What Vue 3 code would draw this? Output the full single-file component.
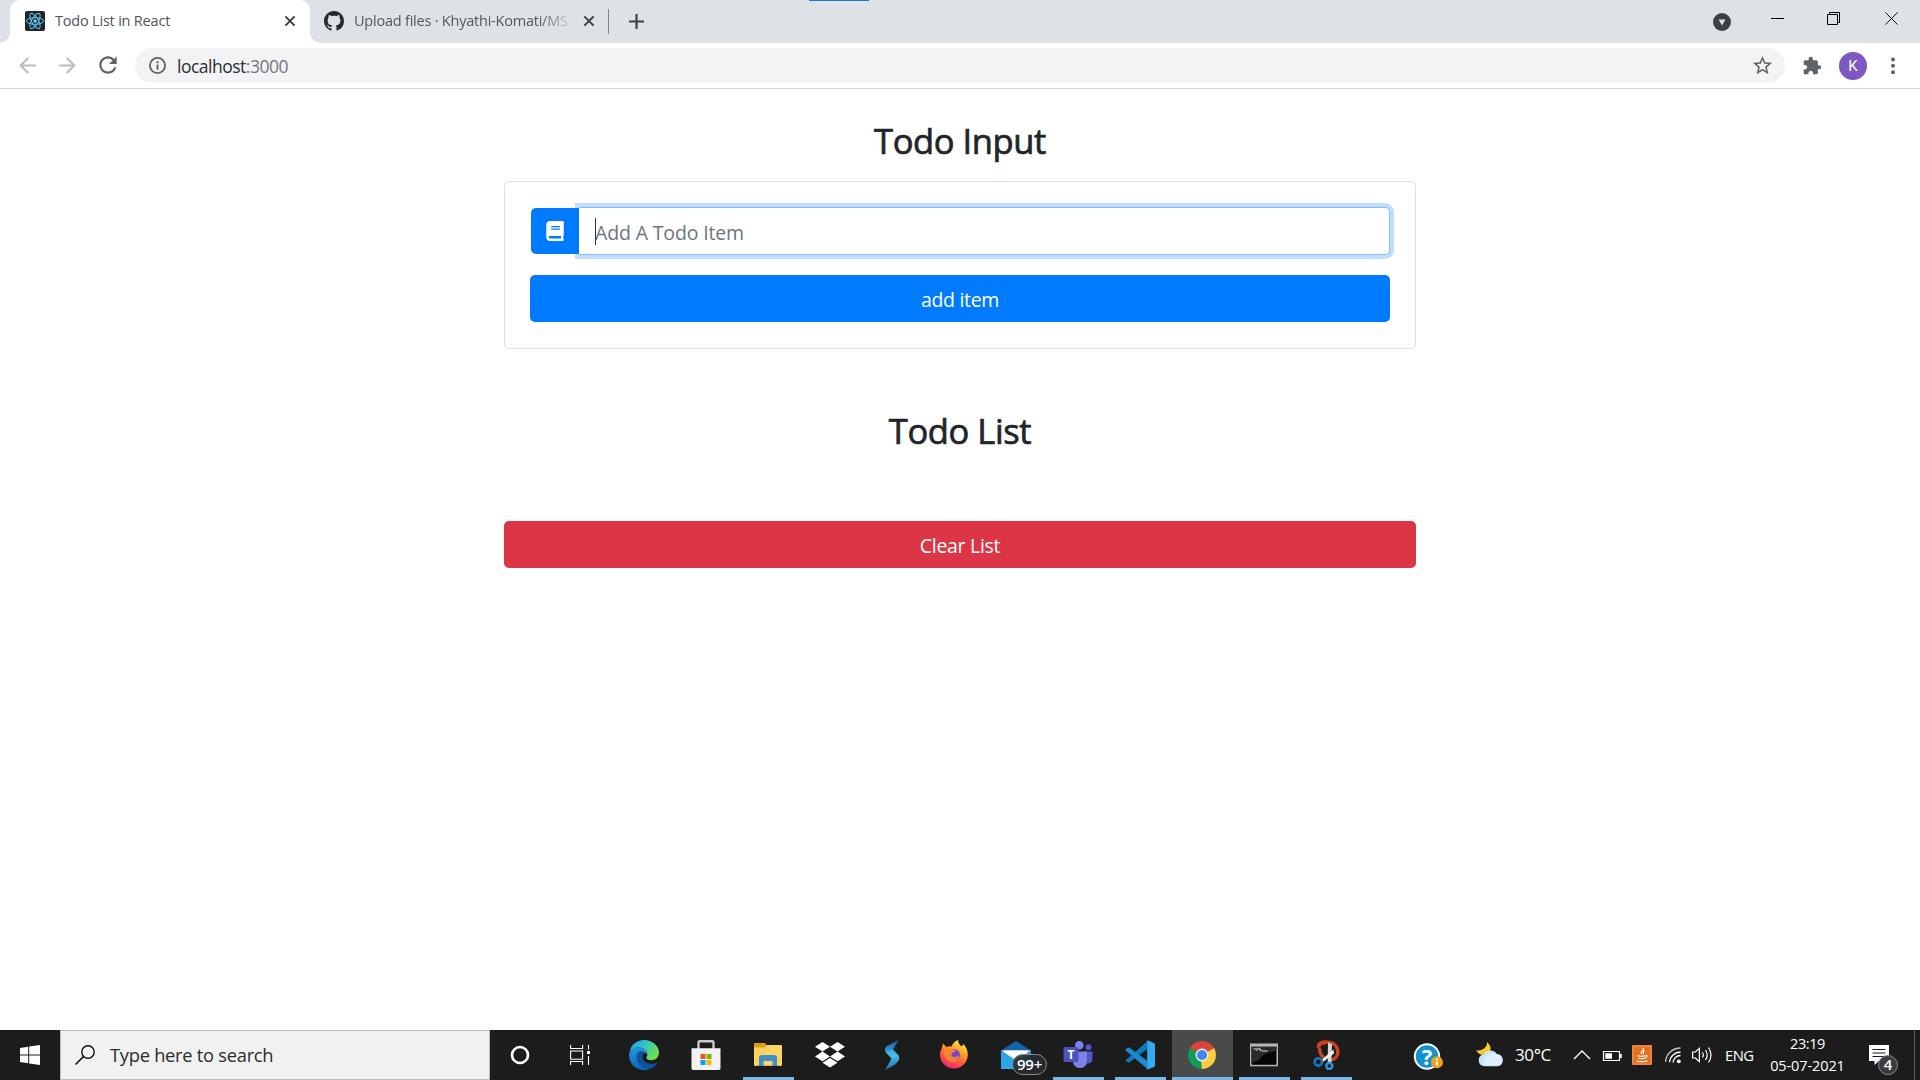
<script setup>
const windowsTiles = ['M0 2.9 8.2 1.7V9.5H0z', 'M9.2 1.5 20 0V9.5H9.2z', 'M0 10.5H8.2V18.3L0 17.1z', 'M9.2 10.5H20V20L9.2 18.5z']
</script>

<template>
  <div class="screen">
    <header class="tabstrip">
      <div class="tab active">
        <svg class="favicon" viewBox="0 0 20 20">
          <rect width="20" height="20" rx="2" fill="#20232a" />
          <g fill="none" stroke="#61c9e8" stroke-width="1">
            <ellipse cx="10" cy="10" rx="8.6" ry="3.3" />
            <ellipse cx="10" cy="10" rx="8.6" ry="3.3" transform="rotate(60 10 10)" />
            <ellipse cx="10" cy="10" rx="8.6" ry="3.3" transform="rotate(120 10 10)" />
          </g>
          <circle cx="10" cy="10" r="1.7" fill="#61dafb" />
        </svg>
        <span class="title t1">Todo List in React</span>
        <svg class="x x1" viewBox="0 0 12 12"><path d="M1.4 1.4l9.2 9.2M10.6 1.4l-9.2 9.2" stroke="#3c4043" stroke-width="2" /></svg>
      </div>
      <div class="tab second">
        <svg class="favicon" viewBox="0 0 16 16"><path fill="#24292e" d="M8 0C3.58 0 0 3.58 0 8c0 3.54 2.29 6.53 5.47 7.59.4.07.55-.17.55-.38 0-.19-.01-.82-.01-1.49-2.01.37-2.53-.49-2.69-.94-.09-.23-.48-.94-.82-1.13-.28-.15-.68-.52-.01-.53.63-.01 1.08.58 1.23.82.72 1.21 1.87.87 2.33.66.07-.52.28-.87.51-1.07-1.78-.2-3.64-.89-3.64-3.95 0-.87.31-1.59.82-2.15-.08-.2-.36-1.02.08-2.12 0 0 .67-.21 2.2.82.64-.18 1.32-.27 2-.27s1.36.09 2 .27c1.53-1.04 2.2-.82 2.2-.82.44 1.1.16 1.92.08 2.12.51.56.82 1.27.82 2.15 0 3.07-1.87 3.75-3.65 3.95.29.25.54.73.54 1.48 0 1.07-.01 1.93-.01 2.2 0 .21.15.46.55.38A8.01 8.01 0 0 0 16 8c0-4.42-3.58-8-8-8z" /></svg>
        <span class="title t2">Upload files · Khyathi-Komati/MS</span>
        <svg class="x x2" viewBox="0 0 12 12"><path d="M1.4 1.4l9.2 9.2M10.6 1.4l-9.2 9.2" stroke="#3c4043" stroke-width="2" /></svg>
      </div>
      <i class="tabsep"></i>
      <svg class="plus" viewBox="0 0 15 15"><path d="M7.5 0v15M0 7.5h15" stroke="#3c4043" stroke-width="2.2" /></svg>
      <i class="accent"></i>
      <div class="winctl">
        <svg class="tabsearch" viewBox="0 0 18 18"><circle cx="9" cy="9" r="9" fill="#3c4043" /><path d="M5.6 6.6h6.8L9 12.4z" fill="#dee1e6" /></svg>
        <svg class="min" viewBox="0 0 13 13"><path d="M0 6.5h13" stroke="#000" /></svg>
        <svg class="max" viewBox="0 0 13 13"><path d="M.5 2.5h10v10H.5zM2.5 2.5v-2h10v10h-2" fill="none" stroke="#000" /></svg>
        <svg class="cls" viewBox="0 0 13 13"><path d="M.4.4l12.2 12.2M12.6.4.4 12.6" stroke="#111" /></svg>
      </div>
    </header>

    <div class="toolbar">
      <svg class="nav" viewBox="0 0 24 24"><path fill="#babcbe" d="M20 11H7.83l5.59-5.59L12 4l-8 8 8 8 1.41-1.41L7.83 13H20v-2z" /></svg>
      <svg class="nav" viewBox="0 0 24 24"><path fill="#babcbe" d="M12 4l-1.41 1.41L16.17 11H4v2h12.17l-5.58 5.59L12 20l8-8z" /></svg>
      <svg class="nav reload" viewBox="0 0 24 24"><path fill="#5f6368" d="M17.65 6.35C16.2 4.9 14.21 4 12 4c-4.42 0-7.99 3.58-7.99 8s3.57 8 7.99 8c3.73 0 6.84-2.55 7.73-6h-2.08c-.82 2.33-3.04 4-5.65 4-3.31 0-6-2.69-6-6s2.69-6 6-6c1.66 0 3.14.69 4.22 1.78L13 11h7V4l-2.35 2.35z" /></svg>
      <div class="omnibox">
        <svg class="info" viewBox="0 0 16 16"><circle cx="8" cy="8" r="7.1" fill="none" stroke="#5f6368" stroke-width="1.7" /><path d="M8 7v5M8 4v1.8" stroke="#5f6368" stroke-width="1.8" /></svg>
        <span class="url">localhost<span class="port">:3000</span></span>
        <svg class="star" viewBox="0 0 24 24"><path fill="#5f6368" d="M22 9.24l-7.19-.62L12 2 9.19 8.63 2 9.24l5.46 4.73L5.82 21 12 17.27 18.18 21l-1.63-7.03L22 9.24zM12 15.4l-3.76 2.27 1-4.28-3.32-2.88 4.38-.38L12 6.1l1.71 4.04 4.38.38-3.32 2.88 1 4.28L12 15.4z" /></svg>
      </div>
      <svg class="ext" viewBox="0 0 24 24"><path fill="#5f6368" d="M20.5 11H19V7c0-1.1-.9-2-2-2h-4V3.5C13 2.12 11.88 1 10.5 1S8 2.12 8 3.5V5H4c-1.1 0-1.99.9-1.99 2v3.8H3.5c1.49 0 2.7 1.21 2.7 2.7s-1.21 2.7-2.7 2.7H2V20c0 1.1.9 2 2 2h3.8v-1.5c0-1.49 1.21-2.7 2.7-2.7 1.49 0 2.7 1.21 2.7 2.7V22H17c1.1 0 2-.9 2-2v-4h1.5c1.38 0 2.5-1.12 2.5-2.5S21.88 11 20.5 11z" /></svg>
      <span class="avatar">K</span>
      <svg class="dots" viewBox="0 0 8 18" fill="#5f6368"><circle cx="4" cy="2.4" r="2" /><circle cx="4" cy="8.8" r="2" /><circle cx="4" cy="15.2" r="2" /></svg>
    </div>

    <main class="page">
      <h3 class="h-input">Todo Input</h3>
      <section class="card">
        <div class="group">
          <span class="prepend">
            <svg viewBox="0 0 448 512"><path fill="#fff" d="M448 360V24c0-13.3-10.7-24-24-24H96C43 0 0 43 0 96v320c0 53 43 96 96 96h328c13.3 0 24-10.7 24-24v-16c0-7.5-3.5-14.3-8.9-18.7-4.2-15.4-4.2-59.3 0-74.7 5.4-4.3 8.9-11.1 8.9-18.6zM128 134c0-3.3 2.7-6 6-6h212c3.3 0 6 2.7 6 6v20c0 3.3-2.7 6-6 6H134c-3.3 0-6-2.7-6-6v-20zm0 64c0-3.3 2.7-6 6-6h212c3.3 0 6 2.7 6 6v20c0 3.3-2.7 6-6 6H134c-3.3 0-6-2.7-6-6v-20zm253.4 250H96c-17.7 0-32-14.3-32-32 0-17.6 14.4-32 32-32h285.4c-1.9 17.1-1.9 46.9 0 64z" /></svg>
          </span>
          <div class="field"><i class="caret"></i><span class="placeholder">Add A Todo Item</span></div>
        </div>
        <button class="btn add">add item</button>
      </section>
      <h3 class="h-list">Todo List</h3>
      <button class="btn clear">Clear List</button>
    </main>

    <footer class="taskbar">
      <div class="start"><svg viewBox="0 0 20 20" width="20" height="20" fill="#fff"><path v-for="d in windowsTiles" :key="d" :d="d" /></svg></div>
      <div class="search">
        <svg viewBox="0 0 20 20" width="20" height="20"><circle cx="13" cy="7" r="6.2" fill="none" stroke="#111" stroke-width="1.4" /><path d="M8.6 11.4.5 19.5" stroke="#111" stroke-width="1.5" /></svg>
        <span>Type here to search</span>
      </div>
      <div class="slot sys"><svg width="20" height="20" viewBox="0 0 20 20"><circle cx="10" cy="10" r="8" fill="none" stroke="#fff" stroke-width="2.6" /></svg></div>
      <div class="slot sys"><svg width="20" height="20" viewBox="0 0 20 20"><path d="M.6 0v3.5h12V0M.6 20v-3.5h12V20M.6 6h12v8.2H.6zM18.5 0v4.5M18.5 11v9" fill="none" stroke="#fff" stroke-width="1.1" /><path d="M17 6h3v3h-3z" fill="#fff" /></svg></div>

      <div class="slot first">
        <svg width="30" height="30" viewBox="0 0 30 30">
          <defs>
            <linearGradient id="eg1" x1="0" y1="0" x2="1" y2=".5"><stop offset="0" stop-color="#269edb" /><stop offset=".5" stop-color="#32c3d0" /><stop offset="1" stop-color="#6ee04b" /></linearGradient>
            <linearGradient id="eg2" x1="0" y1="0" x2="0" y2="1"><stop offset="0" stop-color="#2297d8" /><stop offset="1" stop-color="#0c65bd" /></linearGradient>
          </defs>
          <path fill="url(#eg1)" d="M.5 13C1.500 5 7.500 0 15 0c8.500 0 15 6 15 12.500 0 4.800-3.500 7.700-7.500 7.700-3.700 0-5.200-1.500-5.200-2.500 0-.8 1-1.200 1-3.200C18.300 11 14.800 7.600 10 7.600 5.500 7.600 2 9.500.5 13z" />
          <path fill="url(#eg2)" d="M0 15C.5 10.500 4.700 7.300 10 7.300c5 0 8.400 3.700 8.400 7-.8-1.100-2-1.600-3.300-1.600-4.400 1.500-5 6-3.200 9.800 1.600 3.700 5 6.300 8.500 6.700C11 32.300 0 26.500 0 15z" />
          <path fill="#12509b" d="M10 11.500c-3.500 3-3.200 8.500 0 12.600 3.200 4.100 8.400 6 12.700 4.200 2.200-.9 4.200-2.800 5.200-4.600.3-.6-.1-.9-.8-.6-4 1.800-8.900 1-11.700-2-2.400-2.500-2.600-6-.3-8.400-1.500-1.800-3.300-2.400-5.100-1.200z" />
        </svg>
      </div>
      <div class="slot store">
        <svg width="30" height="30" viewBox="0 0 30 30"><path d="M7.500 10V2.500q0-1.300 1.300-1.300h12.400q1.300 0 1.300 1.300V10" fill="none" stroke="#c9c9c9" stroke-width="2.400" /><path d="M.5 8.200h29v20q0 1.800-1.800 1.800H2.300Q.5 30 .5 28.200z" fill="#f2f2f2" /><path fill="#f25022" d="M9.500 14h5v5h-5z" /><path fill="#7fba00" d="M15.500 14h5v5h-5z" /><path fill="#00a4ef" d="M9.500 20h5v5h-5z" /><path fill="#ffb900" d="M15.500 20h5v5h-5z" /></svg>
      </div>
      <div class="slot run">
        <svg width="30" height="30" viewBox="0 0 30 30"><path d="M1 4q0-1 1-1h10l2.500 3H28q1 0 1 1v18.500H1z" fill="#e09b16" /><path d="M1 7.500h10.500L14 5h14q1 0 1 1v18.800q0 1-1 1H2q-1 0-1-1z" fill="#fcd462" /><path d="M6 26V18q0-3 3-3h12q3 0 3 3v8h-4.500v-5h-9v5z" fill="#3f8fcb" /></svg>
      </div>
      <div class="slot">
        <svg width="30" height="30" viewBox="0 0 30 30" fill="#fff"><path d="M7.500 2 15 6.800 7.500 11.600 0 6.800zM22.500 2 30 6.800l-7.500 4.800L15 6.800zM0 16.400l7.500-4.800L15 16.400l-7.500 4.800zM22.500 11.600l7.500 4.800-7.500 4.800L15 16.400zM7.500 22.800 15 18l7.500 4.800L15 27.500z" /></svg>
      </div>
      <div class="slot">
        <svg width="30" height="30" viewBox="0 0 30 30"><defs><linearGradient id="sg" x1="0" y1="0" x2="0" y2="1"><stop offset="0" stop-color="#1e56a5" /><stop offset=".55" stop-color="#3fb4e6" /><stop offset="1" stop-color="#2b6cb8" /></linearGradient></defs><path fill="url(#sg)" d="M21.500 0 9.200 6.500Q7 9 8.500 12l6 6.500L8.200 30l9.500-5.200q6.300-4.600 4-9.300L16 9.500z" /><path d="M8.500 12l7.500-2.500 5.700 6L14.500 18.500z" fill="#4fd4ef" opacity=".4" /></svg>
      </div>
      <div class="slot">
        <svg width="30" height="30" viewBox="0 0 30 30"><defs><linearGradient id="fg" x1=".8" y1="0" x2=".3" y2="1"><stop offset="0" stop-color="#fff04a" /><stop offset=".4" stop-color="#ff9a26" /><stop offset=".72" stop-color="#ff4f43" /><stop offset="1" stop-color="#e5267c" /></linearGradient></defs><path fill="url(#fg)" d="M2.700 8.500 4 3.500 7.500 7q2.500-1 5-.6Q14.500 1.600 19 0q.3 4 3.800 6.500L24.500 4q4.500 5.500 4.300 11C28.300 23 22.500 28.500 15 28.500S1 22.500 1 15q0-3.700 1.700-6.500z" /><circle cx="15" cy="15" r="6" fill="#7542c9" /><path d="M5 8q4.500-1.500 8.500 1.300l3.800.7q-1 2.500-4.300 2.700-1.500 3.800 2 4.300 3 .3 5-1.700 0 6.500-6.500 7Q6 21.500 5 13z" fill="#ff8b2a" opacity=".85" /></svg>
      </div>
      <div class="slot mail">
        <svg width="30" height="30" viewBox="0 0 30 30"><path d="M0 10.500 15 1l15 9.500V29H0z" fill="#1163ae" /><path d="M0 10.500h30L15 21z" fill="#f3f3f3" /><path d="M0 11.500 15 20l15-8.500V29H0z" fill="#2aa7ea" /><path d="M3 10.500h24L15 19z" fill="#fff" /></svg>
        <span class="count">99+</span>
      </div>
      <div class="slot run">
        <svg width="30" height="30" viewBox="0 0 30 30"><circle cx="25.500" cy="7.300" r="3" fill="#5059c9" /><path d="M21 11.500h8.500v7q0 5-5 5H21z" fill="#5059c9" /><circle cx="16.300" cy="5.200" r="4.300" fill="#7b83eb" /><path d="M10 11.500h14V20q0 8-7 8t-7-8z" fill="#7b83eb" /><rect x=".5" y="7" width="15" height="15" rx="1.500" fill="#4b53bc" /><text x="8" y="18.800" text-anchor="middle" font-family="Open Sans, sans-serif" font-size="12" font-weight="700" fill="#fff">T</text></svg>
      </div>
      <div class="slot run">
        <svg width="30" height="30" viewBox="0 0 30 30"><path d="M1.500 19.500 22 1.500v7.800L4.500 22.200q-1 .5-1.800-.1L.6 20.700q-.5-.6.900-1.200z" fill="#1277bd" /><path d="M.6 9.300 2.700 7.700q.9-.5 1.800 0L22.500 21v8L.6 10.600q-.5-.7 0-1.300z" fill="#1c8ad2" /><path d="M21 30q1.200-.3 1.200-1.900V1.900Q22.200.5 21.200 0l7.300 2.700Q30 3.300 30 4.800v20.400q0 1.500-1.500 2.100z" fill="#35a9f2" /></svg>
      </div>
      <div class="slot run full">
        <svg width="28" height="28" viewBox="0 0 28 28"><path d="M14 14 1.880 7A14 14 0 0 1 26.120 7z" fill="#db4437" /><path d="M14 14l12.120-7A14 14 0 0 1 14 28z" fill="#ffcd40" /><path d="M14 14v14A14 14 0 0 1 1.880 7z" fill="#0f9d58" /><path d="M14 7.500h12.400L14 10z" fill="#db4437" /><path d="M19.600 17.300 14 28l-1-9z" fill="#ffcd40" /><path d="M8.400 17.300 1.880 7 10 12z" fill="#0f9d58" /><circle cx="14" cy="14" r="6.500" fill="#f1f1f1" /><circle cx="14" cy="14" r="5.100" fill="#4285f4" /></svg>
      </div>
      <div class="slot run">
        <svg width="30" height="30" viewBox="0 0 30 30"><path d="M1 3.500h28v22.800H1z" fill="#b5b5b5" /><path d="M2.500 6.800h25v18h-25z" fill="#050505" /><path d="M2.500 6.800h25v4.500Q14 12 10 20l-7.500 3z" fill="#2b2b2b" /><path d="M4.500 9h2.500M8 8v3M9.500 8l3 3M13 11h5.500" stroke="#ddd" stroke-width="1.100" /></svg>
      </div>
      <div class="slot run">
        <svg width="30" height="30" viewBox="0 0 30 30"><path d="M8 7.500C7 3.500 12 2 17 2.300c7.500.5 11 6 9.500 12-1 4-5 6.500-8.500 5.500M8.500 8C8.500 13 11 17 15 19" fill="none" stroke="#c9431b" stroke-width="3.400" /><path d="M8 7.500Q6.500 2.500 15 2.300" fill="none" stroke="#c9431b" stroke-width="4" /><path d="M17 2.500l4 1.500-.5 18-3.800 1z" fill="#d6d6d6" /><path d="M22.500 9.500l.5 4-11 8.500-1.500-2z" fill="#efefef" /><circle cx="7.300" cy="22" r="3.700" fill="none" stroke="#1976bd" stroke-width="2.600" /><circle cx="18.300" cy="26" r="3" fill="none" stroke="#2b97dc" stroke-width="2.400" /></svg>
      </div>

      <svg class="help" viewBox="0 0 36 30"><circle cx="16" cy="16.500" r="13.200" fill="#fff" /><circle cx="16" cy="16.500" r="11.200" fill="#1193cf" /><text x="16" y="24.500" text-anchor="middle" font-family="Open Sans, sans-serif" font-size="22" font-weight="700" fill="#fff">?</text><circle cx="26" cy="22.300" r="6" fill="#f0a21f" /><path d="M26 21.500v4M26 18.500v1.800" stroke="#fff" stroke-width="1.800" /></svg>
      <svg class="weather" viewBox="0 0 30 30"><path d="M12 2q5 4 3 10l-8 3q-4-1-6-5 4 1.500 8-1.500 3.500-3 3-6.500z" fill="#fbc926" /><path d="M9 26.200a6 6 0 0 1-.6-11.800 8 8 0 0 1 13.600-.4 6.200 6.200 0 0 1 1 12.200z" fill="#c5e2fa" /><path d="M10 25.500a6 6 0 0 1 1.500-9.500 7 7 0 0 1 10-1.500 5.500 5.500 0 0 1 1 11z" fill="#dceefd" /></svg>
      <span class="temp">30°C</span>
      <svg class="chev" viewBox="0 0 18 10"><path d="M1 9l8-8 8 8" fill="none" stroke="#fff" stroke-width="1.400" /></svg>
      <svg class="batt" viewBox="0 0 21 12"><path d="M1.500 1.500h16v9h-16z" fill="none" stroke="#fff" stroke-width="1.200" /><path d="M3.300 3.300h6.700v5.400H3.300zM18 4h1.700v4H18z" fill="#fff" /></svg>
      <svg class="java" viewBox="0 0 20 20"><rect width="20" height="20" rx="1" fill="#e2701f" /><rect x="1" y="1" width="18" height="18" fill="none" stroke="#f0995a" /><path d="M10.500 3q2 1.600-.7 3.300-1.400 1.200.2 2.700M12.500 5.500q-2.200 1.300-1 3.500M5.500 10.800q4 1 7.500 0M13.500 10.300q2.500.2 1 1.900l-2 .8M6.500 13.200q3 .8 6 0M4.500 16q5.500 1.500 11-.3" fill="none" stroke="#fff" stroke-width="1.100" /></svg>
      <svg class="wifi" viewBox="0 0 18 18"><g fill="none" stroke="#fff" stroke-width="1.300"><path d="M1.500 16A15 15 0 0 1 16.500 2" opacity=".75" /><path d="M5.500 16.200A11 11 0 0 1 16.500 6" /><path d="M9 16.500A7.500 7.500 0 0 1 16.500 9.500" /></g><circle cx="14.800" cy="15.300" r="1.900" fill="#fff" /></svg>
      <svg class="vol" viewBox="0 0 24 20"><path d="M2.600 7h2.800l4-3.600v13.200l-4-3.600H2.600z" fill="none" stroke="#fff" stroke-width="1.200" /><path d="M12.500 7.500q1.600 2.500 0 5M15.500 5q3.400 5 0 10M18.500 2.500q5 7.500 0 15" fill="none" stroke="#fff" stroke-width="1.200" /></svg>
      <span class="lang">ENG</span>
      <div class="clock"><span class="time">23:19</span><span class="date">05-07-2021</span></div>
      <div class="notif">
        <svg width="20" height="20" viewBox="0 0 20 20"><path d="M0 0h20v16H10l-4.500 4v-4H0z" fill="#fff" /><path d="M3.500 4.500h13M3.500 8h13M3.500 11.500h13" stroke="#1c1c1c" stroke-width="1.200" /></svg>
        <span class="four">4</span>
      </div>
      <i class="peek"></i>
    </footer>
  </div>
</template>

<style>
body { margin: 0; background: #fff; overflow: hidden; }
</style>

<style scoped>
.screen { width: 1920px; height: 1080px; display: flex; flex-direction: column; background: #fff; font-family: "Open Sans", "Noto Sans", sans-serif; overflow: hidden; }
.screen svg { display: block; flex: none; }
span { white-space: nowrap; }

.tabstrip { position: relative; height: 43px; flex: none; background: #dee1e6; display: flex; align-items: center; }
.tab { display: flex; align-items: center; height: 43px; box-sizing: border-box; flex: none; }
.tab.active { position: relative; width: 300px; margin-left: 10px; padding-left: 15px; background: #fff; border-radius: 10px 10px 0 0; }
.tab.active::before, .tab.active::after { content: ""; position: absolute; bottom: 0; width: 10px; height: 10px; }
.tab.active::before { left: -10px; background: radial-gradient(circle at 0 0, #dee1e6 9.5px, #fff 10px); }
.tab.active::after { right: -10px; background: radial-gradient(circle at 100% 0, #dee1e6 9.5px, #fff 10px); }
.tab.second { width: 298px; padding-left: 14px; }
.favicon { width: 20px; height: 20px; margin-top: -1px; }
.title { font-size: 14.5px; line-height: 20px; color: #505458; margin: -2px 0 0 10px; overflow: hidden; }
.t1 { width: 218px; letter-spacing: -0.2px; }
.t2 { width: 218px; letter-spacing: -0.22px; color: #54585d; -webkit-mask-image: linear-gradient(90deg, #000 185px, transparent 220px); mask-image: linear-gradient(90deg, #000 185px, transparent 220px); }
.x { width: 12px; height: 12px; margin-top: -1px; }
.x1 { margin-left: 11px; }
.x2 { margin-left: 11px; }
.tabsep { width: 1px; height: 25px; background: #80868b; flex: none; }
.plus { width: 15px; height: 15px; margin-left: 20px; }
.accent { position: absolute; left: 809px; top: 0; width: 60px; height: 1px; background: #1979ca; }
.winctl { display: flex; align-items: center; margin-left: auto; padding-right: 22px; height: 37px; align-self: flex-start; }
.tabsearch { width: 18px; height: 18px; margin: 6px 40px 0 0; }
.min, .max, .cls { width: 13px; height: 13px; }
.min { margin-right: 43px; }
.max { margin-right: 45px; }

.toolbar { height: 46px; flex: none; box-sizing: border-box; border-bottom: 1px solid #d5d7da; display: flex; align-items: center; background: #fff; }
.nav { width: 25px; height: 25px; margin-left: 15px; margin-top: -1px; }
.nav.reload { width: 26px; height: 26px; }
.omnibox { width: 1650px; height: 35px; margin-left: 14px; border-radius: 18px; background: #f1f3f4; display: flex; align-items: center; box-sizing: border-box; padding: 0 11px 0 14px; flex: none; }
.info { width: 17px; height: 17px; }
.url { font-size: 17.5px; line-height: 26px; color: #2c2e32; margin-left: 11px; letter-spacing: -0.5px; }
.port { color: #73777c; }
.star { width: 23px; height: 23px; margin-left: auto; }
.ext { width: 20px; height: 20px; margin-left: 17px; }
.avatar { width: 28px; height: 28px; margin-left: 17px; border-radius: 50%; background: #7e57c2; color: #fff; font: 15px/28px Roboto, sans-serif; text-align: center; }
.dots { width: 8px; height: 18px; margin-left: 21.5px; }

.page { flex: 1; width: 912px; margin: 0 auto; padding-top: 31px; box-sizing: border-box; }
h3 { margin: 0; height: 42px; line-height: 42px; font-size: 34.5px; font-weight: 500; color: #212529; text-align: center; white-space: nowrap; -webkit-text-stroke: 0.7px #212529; letter-spacing: -0.4px; }
.card { box-sizing: border-box; height: 168px; margin: 19px 0 61px; border: 1px solid #dfdfdf; border-radius: 5px; padding: 25px; }
.group { display: flex; height: 48px; margin-bottom: 20px; }
.prepend { position: relative; z-index: 1; width: 48px; height: 46px; margin: 1px 0 0 1px; display: flex; align-items: center; justify-content: center; background: #007bff; border-radius: 5px 0 0 5px; }
.prepend svg { width: 18px; height: 20px; margin-top: -1px; }
.field { position: relative; flex: 1; box-sizing: border-box; border: 1px solid #80bdff; border-left: 0; border-radius: 0 5px 5px 0; box-shadow: 0 0 0 4px #bfdeff; padding-left: 16px; background: #fff; color: #6c757d; font-size: 19.5px; line-height: 49px; }
.placeholder { letter-spacing: -0.15px; }
.caret { position: absolute; left: 16px; top: 10px; width: 1px; height: 27px; background: #333; }
.btn { display: block; width: 100%; height: 47px; padding: 2px 0 0; border: 0; border-radius: 5px; color: #fff; font: 19.5px/45px "Open Sans", "Noto Sans", sans-serif; text-align: center; }
.add { background: #007bff; letter-spacing: -0.3px; }
.clear { background: #dc3545; margin-top: 69px; letter-spacing: -0.3px; }

.taskbar { height: 50px; flex: none; background: #1c1c1c; display: flex; align-items: center; color: #fff; }
.start { width: 60px; display: flex; justify-content: center; }
.search { width: 430px; height: 50px; box-sizing: border-box; background: #f1f1f1; border: 1px solid #bdbdbd; display: flex; align-items: center; padding-left: 14px; gap: 15px; color: #2b2b2b; font-size: 18.3px; letter-spacing: -0.26px; flex: none; }
.search span { margin-top: -2px; }
.slot { position: relative; width: 62px; height: 50px; display: flex; align-items: center; justify-content: center; flex: none; }
.slot.sys { width: 60px; }
.slot.first { margin-left: 3px; }
.slot.store svg { margin-left: -1px; }
.slot.run::after { content: ""; position: absolute; left: 6px; bottom: 0; width: 51px; height: 3px; background: #76b9ed; }
.slot.full { background: linear-gradient(90deg, #4a4a4a, #4a4a4a) 1px 0 / 61px 50px no-repeat; }
.slot.full::after { left: 1px; width: 61px; }
.count { position: absolute; left: 27px; top: 24px; width: 35px; height: 21px; box-sizing: border-box; border: 1px solid #8b8b8b; border-radius: 11px; background: rgba(40, 44, 48, 0.9); font-size: 15px; font-weight: 600; line-height: 19px; text-align: center; letter-spacing: -0.3px; }
.help { width: 36px; height: 30px; margin-left: 54px; }
.weather { width: 30px; height: 30px; margin-left: 28px; }
.temp { width: 40px; margin-left: 10px; margin-top: -1px; font-size: 17px; letter-spacing: -0.4px; }
.chev { width: 18px; height: 10px; margin-left: 18px; }
.batt { width: 21px; height: 12px; margin: 1px 0 0 11px; }
.java { width: 20px; height: 20px; margin-left: 9px; }
.wifi { width: 18px; height: 18px; margin-left: 12px; }
.vol { width: 24px; height: 20px; margin-left: 8px; }
.lang { width: 31px; margin-left: 11px; font-size: 14.8px; letter-spacing: -0.5px; }
.clock { width: 85px; margin-left: 9px; display: flex; flex-direction: column; align-items: center; font-size: 14.5px; line-height: 22px; letter-spacing: -0.1px; }
.time { letter-spacing: -0.4px; }
.notif { position: relative; width: 32px; height: 20px; margin-left: 19px; }
.four { position: absolute; left: 9px; top: 10px; width: 20px; height: 20px; box-sizing: border-box; border: 1px solid #858585; border-radius: 50%; background: #3c3c3c; font-size: 15px; font-weight: 600; line-height: 17px; text-align: center; }
.peek { width: 1px; height: 50px; margin-left: 13px; background: #5a5a5a; }
</style>
